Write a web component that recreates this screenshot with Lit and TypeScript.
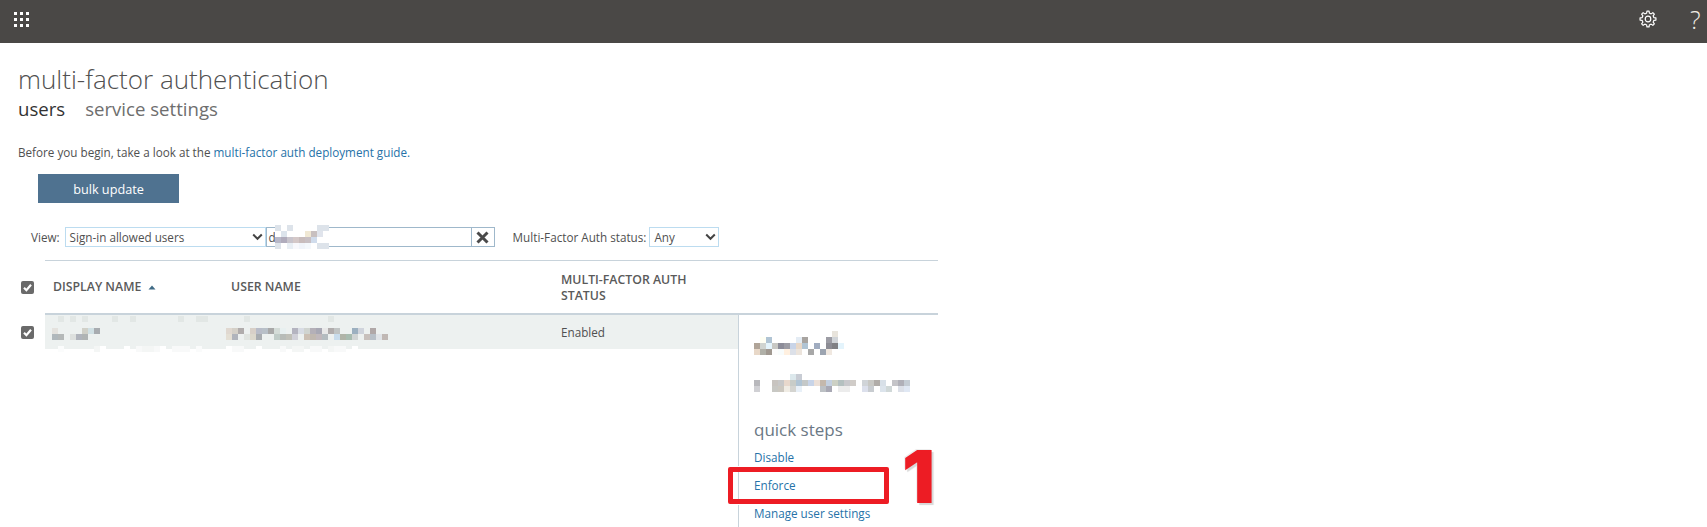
import { LitElement, html, css, svg } from "lit";
import { customElement } from "lit/decorators.js";

function mosaic(rows: string[], cls: string) {
  return html`<div class="mosaic ${cls}">
    ${rows.map(
      (r) => html`<div class="mrow">
        ${r.split(" ").map((c) => {
          const m = c.match(/^([0-9a-f]{6}|\.)$/);
          return m && c !== "."
            ? html`<i style="background:#${c}"></i>`
            : html`<i></i>`;
        })}
      </div>`
    )}
  </div>`;
}
const dots = (n: number) => Array(n).fill(".").join(" ");

const rowMosaic = [
  `. e2e7e5 . e2e7e5 . e2e7e5 . . . . e2e7e5 . . e2e7e5 . . . . . . . e2e7e5 . . e2e7e5 e2e7e5 ${dots(6)} e2e7e5 ${dots(13)} e2e7e5`,
  dots(3),
  `e4e2de ${dots(4)} d0d0c8 d0e0e4 a8acb0 ${dots(21)} e0d8d0 d4d0c8 b0acac . d8d0c8 b8bcc8 b8c0c8 a8a8a8 d4dcd8 e8f0f0 . b4b4c0 d8dce4 d0d4d0 b4b0b8 a8a8b4 e8e8e8 b0acac c0c4c4 . . 9cb0c0 d0d4dc . b0a8a8`,
  `b0b8bc b4b8b8 . dde0de b0b4bc b0b4b4 ${dots(23)} e4dfd4 b0b4bc . e0e4e0 dcd8cc a8acb0 . . c0ccc8 b8bcb8 c0c0b8 d0d0d8 . ccc0b4 c0b8b0 c0b8bc b4bcc0 . c8dcec b0b4a8 a8bcb0 d0d4d4 . c8c0bc b8c0c8 e0e4e8 c0b8b4`,
  dots(3),
  `. fbfcfc . . . . . f4f6f5 ffffff . . . ffffff . f8f9f9 f4f6f5 f4f6f5 f8f9f9 ffffff . f8f9f9 f8f9f9 f8f9f9 . fafbfb ${dots(4)} ffffff f8f9f9 f8f9f9 . . ffffff . . . f8f9f9 . f4f6f5 f4f6f5 . f8f9f9 f8f9f9 . f4f6f5 f8f9f9 f8f9f9 . ffffff`,
];

const panelMosaic1 = [
  `${dots(13)} e8e4dc`,
  `. fffff4 b0c4d4 ${dots(4)} e4ecf4 a8a4a0 ${dots(3)} 9c9ca4 d0d4d8`,
  `b0a498 d0d4d0 e4f4fc c8c8c4 8c8c98 9c9ca4 c8d4e8 e8d8c8 b0c4d4 . a0acc0 . 8c8c94 808084 e4f4fc`,
  `e8d8c8 b0b0a8 a09890 fcfcfc f8fcfc fff0e0 dce0e8 ece4dc . a8a8a8 . 9ca4b0 f0e8e0`,
];
const panelMosaic2 = [
  `${dots(6)} dce8ec c8ccd4`,
  `b8b8bc . . c8c4c0 c8c8c8 e8d8cc c8ccc8 b0c4d4 c4c8c8 c8d4e8 ece0d8 c4b8ac c4d0e0 ccd0c4 b4c0c0 c8c8cc d0ccc8 . d0d4d8 c8c8c4 b0aca8 d8e0e8 . c4c4c8 b0b0b8 c4ccd4`,
  `d0d0d4 . . c8c8c4 ccc8c0 f0ece4 d4d4d0 e8f0f8 . . . bcc0c4 a8a8b4 . ececec ececec . . dce0ec c8ccd0 . dce4ec d0d8d8 . dce0e8 e0e8f4`,
];
const inputMosaic = [
  `dde3ea . dde3ea . . . . dde3ea dde3ea`,
  `. dce4ec . . . f0e8d4 c8c0c0 e0e4ec .`,
  `b8b8c8 b0acbc c8c4cc d4c8c8 c8bcbc c8c0c4 d0dcec . .`,
  `dde3ea . e8eef4 f8f8fc f0f4fa f4f8fc . dde3ea dde3ea`,
];

function gearPath(cx: number, cy: number, ro: number, ri: number, teeth: number) {
  const pts: string[] = [];
  const step = (Math.PI * 2) / teeth;
  for (let i = 0; i < teeth; i++) {
    const a = i * step;
    const list: [number, number][] = [
      [ri, a - step * 0.5],
      [ri, a - step * 0.3],
      [ro, a - step * 0.17],
      [ro, a + step * 0.17],
      [ri, a + step * 0.3],
    ];
    for (const [r, t] of list)
      pts.push(`${(cx + r * Math.cos(t)).toFixed(2)} ${(cy + r * Math.sin(t)).toFixed(2)}`);
  }
  return "M" + pts.join("L") + "Z";
}

const chevron = html`<svg class="chev" width="11" height="8" viewBox="0 0 11 8">
  <path d="M1.2 1.5L5.5 5.8L9.8 1.5" fill="none" stroke="#444" stroke-width="2" />
</svg>`;

const check = html`<span class="cb"
  ><svg width="13" height="13" viewBox="0 0 13 13">
    <path d="M3 6.8L5.4 9.2L10 3.8" fill="none" stroke="#fff" stroke-width="2.2" />
  </svg></span
>`;

@customElement("app-root")
export class AppRoot extends LitElement {
  static styles = css`
    :host {
      display: block;
      position: relative;
      height: 527px;
      overflow: hidden;
      background: #fff;
      font-family: "Open Sans", "Noto Sans", sans-serif;
      font-size: 11.7px;
      color: #505050;
    }
    .top {
      box-sizing: border-box;
      height: 43px;
      padding-bottom: 5px;
      background: #4a4846;
      display: flex;
      align-items: center;
      justify-content: space-between;
    }
    .waffle {
      margin-left: 14px;
      display: grid;
      grid-template-columns: repeat(3, 3px);
      gap: 3px;
    }
    .waffle i {
      width: 3px;
      height: 3px;
      background: #fff;
    }
    .topright {
      display: flex;
      align-items: center;
    }
    .gear {
      display: block;
      margin-right: 33px;
    }
    .q {
      font-family: "Open Sans", sans-serif;
      font-weight: 300;
      font-size: 25px;
      line-height: 30px;
      color: #f0ece4;
      margin-right: 5px;
      width: 12px;
    }
    main {
      padding-left: 18px;
    }
    h1 {
      margin: 18px 0 0;
      font-weight: 300;
      font-size: 26px;
      line-height: 36px;
      color: #505050;
    }
    .tabs {
      display: flex;
      gap: 20px;
      font-size: 18.6px;
      line-height: 24px;
      color: #6e6e6e;
    }
    .tabs .on {
      color: #333;
    }
    .intro {
      margin: 23px 0 0;
      line-height: 16px;
    }
    a {
      color: #2672a8;
      text-decoration: none;
    }
    .btn {
      margin: 14px 0 0 20px;
      width: 141px;
      height: 29px;
      background: #4f7290;
      color: #fff;
      display: flex;
      align-items: center;
      justify-content: center;
      font-size: 12.7px;
    }
    .filters {
      display: flex;
      align-items: center;
      height: 20px;
      margin: 24px 0 0 13px;
    }
    .lbl {
      white-space: nowrap;
    }
    .sel {
      box-sizing: border-box;
      height: 20px;
      border: 1px solid #bcdcf0;
      display: flex;
      align-items: center;
      justify-content: space-between;
      padding: 0 2px 0 4px;
      color: #505050;
    }
    .sel.view {
      width: 201px;
      margin-left: 5px;
    }
    .sel.any {
      width: 70px;
      margin-left: 3px;
    }
    .search {
      position: relative;
      box-sizing: border-box;
      width: 229px;
      height: 20px;
      border: 1px solid #9fb8cb;
      display: flex;
      align-items: center;
      justify-content: space-between;
      padding-left: 2px;
      color: #505050;
    }
    .search .x {
      box-sizing: border-box;
      width: 23px;
      height: 18px;
      border-left: 1px solid #9fb8cb;
      display: flex;
      align-items: center;
      justify-content: center;
    }
    .filters .status {
      margin-left: 18px;
    }
    .mosaic {
      position: absolute;
    }
    .mrow {
      display: flex;
      height: 6px;
    }
    .mrow i {
      flex: none;
      width: 6px;
      height: 6px;
    }
    .search .mosaic {
      left: 8px;
      top: -3px;
    }
    .search .mosaic i {
      background: #fff;
    }
    .thead {
      display: flex;
      margin-top: 13px;
    }
    .chk {
      flex: none;
      width: 45px;
      box-sizing: border-box;
      padding-left: 21px;
    }
    .cb {
      display: block;
      width: 13px;
      height: 13px;
      background: #6a6a6a;
      border-radius: 2px;
    }
    .cb svg {
      display: block;
    }
    .thead .chk {
      padding-top: 21px;
    }
    .cols {
      flex: none;
      width: 893px;
      height: 52px;
      box-sizing: content-box;
      border-top: 1px solid #c8d3db;
      border-bottom: 2px solid #c8d3db;
      display: flex;
      align-items: center;
      font-weight: 600;
      font-size: 12.3px;
      line-height: 16px;
      color: #5a5a5a;
      text-transform: uppercase;
    }
    .c1 {
      width: 178px;
      padding-left: 8px;
      box-sizing: content-box;
      display: flex;
      align-items: center;
      gap: 7px;
      flex: none;
    }
    .c1 span {
      white-space: nowrap;
    }
    .c1 svg {
      display: block;
    }
    .c2 {
      width: 330px;
      flex: none;
    }
    .c3 {
      width: 150px;
      flex: none;
      padding-top: 2px;
    }
    .body {
      display: flex;
      height: 213px;
    }
    .body .chk {
      padding-top: 11px;
    }
    .row {
      position: relative;
      flex: none;
      width: 693px;
      height: 34px;
      background: #edf1f0;
      box-sizing: border-box;
      padding: 9px 0 0 516px;
      line-height: 16px;
    }
    .row .mosaic {
      left: 7px;
      top: 1px;
    }
    .panel {
      position: relative;
      flex: none;
      width: 200px;
      box-sizing: border-box;
      border-left: 1px solid #c8d3db;
      padding: 103px 0 0 15px;
    }
    .panel .m1 {
      left: 15px;
      top: 16px;
    }
    .panel .m2 {
      left: 15px;
      top: 59px;
    }
    h2 {
      margin: 0;
      font-weight: 400;
      font-size: 17px;
      line-height: 24px;
      color: #6b7885;
    }
    .steps {
      display: flex;
      flex-direction: column;
      gap: 11px;
      margin-top: 7px;
    }
    .steps a {
      line-height: 17px;
      white-space: nowrap;
    }
    .box {
      position: absolute;
      left: 728px;
      top: 467px;
      width: 161px;
      height: 37px;
      box-sizing: border-box;
      border: 5px solid #ed1c24;
      border-radius: 2px;
      box-shadow: 0 0 0 1px #fff;
    }
    .one {
      position: absolute;
      left: 902px;
      top: 435px;
      font-family: "Inter", "Open Sans", sans-serif;
      font-weight: 900;
      font-size: 73px;
      line-height: 84px;
      color: #ed1c24;
      text-shadow: 2px 2px 1px #d8d8d8, -1px -1px 0 #eee;
    }
  `;

  render() {
    return html`
      <div class="top">
        <div class="waffle">${Array(9).fill(0).map(() => html`<i></i>`)}</div>
        <div class="topright">
          <svg class="gear" width="18" height="18" viewBox="0 0 18 18">
            ${svg`<path d=${gearPath(9, 9, 8, 6, 8)} fill="none" stroke="#fff" stroke-width="1.2" stroke-linejoin="round" />
            <circle cx="9" cy="9" r="2.8" fill="none" stroke="#fff" stroke-width="1.2" />`}
          </svg>
          <div class="q">?</div>
        </div>
      </div>
      <main>
        <h1>multi-factor authentication</h1>
        <div class="tabs"><span class="on">users</span><span>service settings</span></div>
        <p class="intro">
          Before you begin, take a look at the
          <a href="#">multi-factor auth deployment guide.</a>
        </p>
        <div class="btn">bulk update</div>
        <div class="filters">
          <span class="lbl">View:</span>
          <div class="sel view"><span>Sign-in allowed users</span>${chevron}</div>
          <div class="search">
            <span>d</span>
            ${mosaic(inputMosaic, "im")}
            <span class="x">
              <svg width="13" height="13" viewBox="0 0 13 13">
                <path d="M1.5 1.5L11.5 11.5M11.5 1.5L1.5 11.5" stroke="#4a4a4a" stroke-width="3" />
              </svg>
            </span>
          </div>
          <span class="lbl status">Multi-Factor Auth status:</span>
          <div class="sel any"><span>Any</span>${chevron}</div>
        </div>
      </main>
      <div class="thead">
        <div class="chk">${check}</div>
        <div class="cols">
          <div class="c1">
            <span>Display name</span>
            <svg width="8" height="5" viewBox="0 0 8 5"><path d="M4 0.5L7.5 4.5H0.5Z" fill="#3f6a85" /></svg>
          </div>
          <div class="c2">User name</div>
          <div class="c3">Multi-Factor Auth Status</div>
        </div>
      </div>
      <div class="body">
        <div class="chk">${check}</div>
        <div class="row">
          ${mosaic(rowMosaic, "rm")}
          Enabled
        </div>
        <div class="panel">
          ${mosaic(panelMosaic1, "m1")} ${mosaic(panelMosaic2, "m2")}
          <h2>quick steps</h2>
          <div class="steps">
            <a href="#">Disable</a>
            <a href="#">Enforce</a>
            <a href="#">Manage user settings</a>
          </div>
        </div>
      </div>
      <div class="box"></div>
      <div class="one">1</div>
    `;
  }
}
